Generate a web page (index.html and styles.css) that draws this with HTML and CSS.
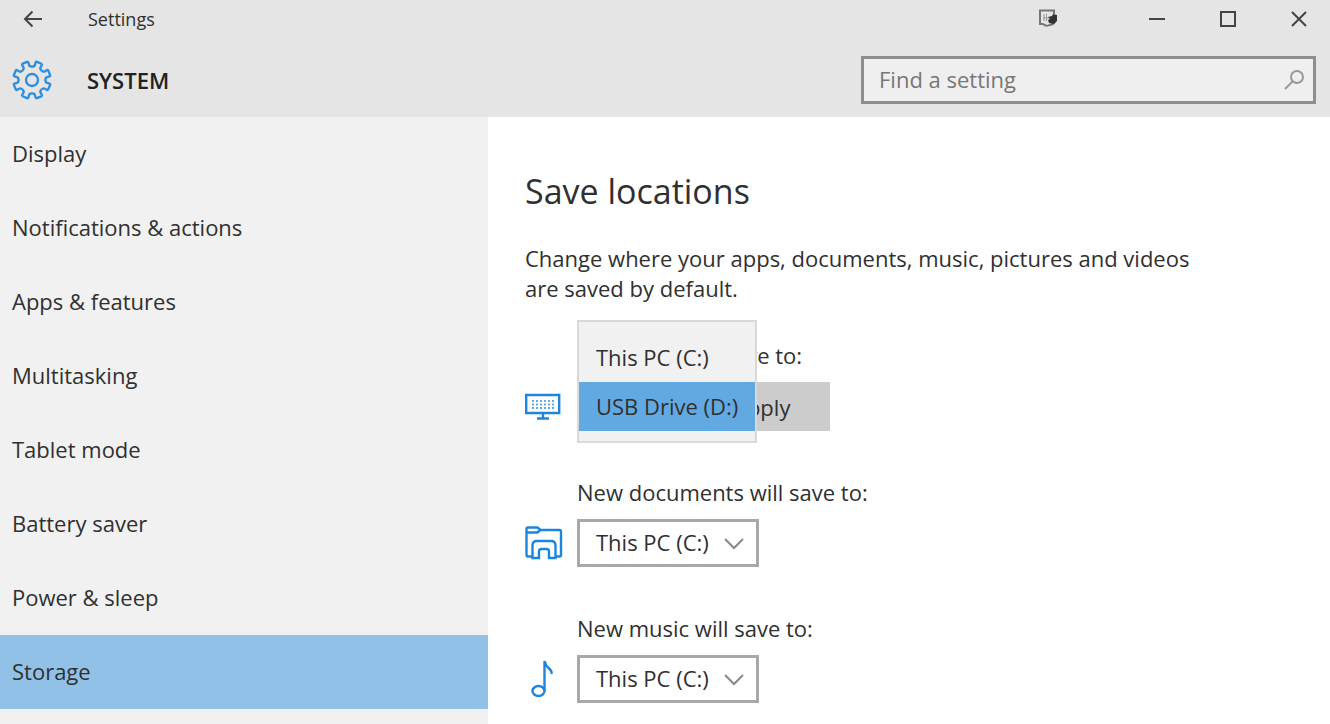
FILE: index.html
```html
<!DOCTYPE html>
<html lang="en">
<head>
<meta charset="utf-8">
<title>Settings</title>
<link rel="stylesheet" href="styles.css">
</head>
<body>
<header class="header">
  <div class="titlebar">
    <button class="icon-button back" aria-label="Back">
      <svg width="20" height="18" viewBox="0 0 20 18"><path d="M19 9H2M9.500 1.500L2 9l7.500 7.500"/></svg>
    </button>
    <span class="app-name">Settings</span>
    <button class="icon-button tablet" aria-label="Window options">
      <svg width="20" height="20" viewBox="0 0 20 20"><path class="thin" d="M16 5V1.500H2V15H5.500"/><path class="thin" d="M5 15Q8 18 11.500 16Q15 16 16.500 13"/><path class="faint" d="M6 5v7M8.500 5v7M5 9h6"/><path class="solid" d="M10 8l4-1 1-2 4 1v6l-3 3-5-1-1-3 2-1z"/></svg>
    </button>
    <button class="icon-button" aria-label="Minimize">
      <svg width="18" height="18" viewBox="0 0 18 18"><path d="M1 9h16"/></svg>
    </button>
    <button class="icon-button" aria-label="Maximize">
      <svg width="18" height="18" viewBox="0 0 18 18"><path d="M2 2h14v14H2z"/></svg>
    </button>
    <button class="icon-button" aria-label="Close">
      <svg width="18" height="18" viewBox="0 0 18 18"><path d="M2 2l14 14M16 2L2 16"/></svg>
    </button>
  </div>
  <div class="heading-row">
    <svg class="gear" width="40" height="40" viewBox="-20 -20 40 40" aria-hidden="true">
      <defs><path id="tooth" d="M0-13.400Q2.800-13.400 3.200-15.800L3.500-17.500Q4-18.500 5-18.100L9.300-16.300Q10.200-15.800 9.900-15L8.900-13.400Q7.500-11.500 9.480-9.480"/></defs>
      <use href="#tooth"/><use href="#tooth" transform="rotate(45)"/><use href="#tooth" transform="rotate(90)"/><use href="#tooth" transform="rotate(135)"/>
      <use href="#tooth" transform="rotate(180)"/><use href="#tooth" transform="rotate(225)"/><use href="#tooth" transform="rotate(270)"/><use href="#tooth" transform="rotate(315)"/>
      <circle r="6"/>
    </svg>
    <h1 class="section-name">SYSTEM</h1>
    <div class="search">
      <input class="search-input" type="text" placeholder="Find a setting" aria-label="Find a setting">
      <svg class="search-icon" width="22" height="22" viewBox="0 0 22 22" aria-hidden="true"><circle cx="14" cy="8" r="6"/><path d="M9.500 12.500L2 20"/></svg>
    </div>
  </div>
</header>
<div class="body">
  <nav class="sidebar">
    <a class="nav-link" href="#">Display</a>
    <a class="nav-link" href="#">Notifications &amp; actions</a>
    <a class="nav-link" href="#">Apps &amp; features</a>
    <a class="nav-link" href="#">Multitasking</a>
    <a class="nav-link" href="#">Tablet mode</a>
    <a class="nav-link" href="#">Battery saver</a>
    <a class="nav-link" href="#">Power &amp; sleep</a>
    <a class="nav-link active" href="#" aria-current="page">Storage</a>
  </nav>
  <main class="content">
    <h2 class="title">Save locations</h2>
    <p class="description">Change where your apps, documents, music, pictures and videos are saved by default.</p>
    <div class="locations">
      <div class="location">
        <label class="label" for="apps">New apps will save to:</label>
        <svg class="icon" width="38" height="40" viewBox="0 0 38 40" aria-hidden="true"><path d="M1.200 8h33v18h-33z"/><path d="M18 27v4M12 31.500h12"/><path class="dots" d="M7 14h22M7 17.500h22M7 21h22"/></svg>
        <div class="controls">
          <select class="select short" id="apps"><option>This PC (C:)</option><option selected>USB Drive (D:)</option></select>
          <button class="apply">Apply</button>
          <ul class="menu" role="listbox" aria-label="New apps will save to">
            <li class="option" role="option" aria-selected="false">This PC (C:)</li>
            <li class="option selected" role="option" aria-selected="true">USB Drive (D:)</li>
          </ul>
        </div>
      </div>
      <div class="location">
        <label class="label" for="documents">New documents will save to:</label>
        <svg class="icon" width="38" height="40" viewBox="0 0 38 40" aria-hidden="true"><path d="M7 33.500H3Q1.500 33.500 1.500 32V6Q1.500 4.500 3 4.500H12.500L15.500 7H34.500Q36 7 36 8.500V32Q36 33.500 34.500 33.500H31M2 9.500H12.500L15.500 7"/><path d="M7.500 35V22.500Q7.500 18 12 18H26Q30.500 18 30.500 22.500V35H24V28.500Q24 26 21.500 26H16.500Q14 26 14 28.500V35Z"/></svg>
        <div class="controls">
          <select class="select" id="documents"><option>This PC (C:)</option><option>USB Drive (D:)</option></select>
          <svg class="chevron" width="20" height="12" viewBox="0 0 20 12" aria-hidden="true"><path d="M1 1l9 9 9-9"/></svg>
        </div>
      </div>
      <div class="location">
        <label class="label" for="music">New music will save to:</label>
        <svg class="icon" width="38" height="40" viewBox="0 0 38 40" aria-hidden="true"><ellipse cx="13.500" cy="32" rx="6" ry="5"/><path d="M19.500 32V2Q20.500 6.500 24 9.500Q27 12 26.500 15"/></svg>
        <div class="controls">
          <select class="select" id="music"><option>This PC (C:)</option><option>USB Drive (D:)</option></select>
          <svg class="chevron" width="20" height="12" viewBox="0 0 20 12" aria-hidden="true"><path d="M1 1l9 9 9-9"/></svg>
        </div>
      </div>
    </div>
  </main>
</div>
</body>
</html>
```
FILE: styles.css
```css
* {
  box-sizing: border-box;
}

body {
  margin: 0;
  min-height: 100vh;
  display: flex;
  flex-direction: column;
  background: #fff;
  color: #303030;
  font: 22px/30px "Open Sans", "Noto Sans", sans-serif;
}

button,
input,
select {
  font: inherit;
  color: inherit;
}

svg {
  display: block;
  fill: none;
  stroke: #444;
  stroke-width: 2;
}

/* Window header */

.header {
  background: #e5e5e5;
  padding-bottom: 13px;
}

.titlebar {
  display: flex;
  align-items: center;
  height: 38px;
  padding-right: 22px;
}

.app-name {
  margin-right: auto;
  font-size: 18px;
}

.icon-button {
  display: flex;
  padding: 0;
  margin-left: 53px;
  border: 0;
  background: none;
}

.back {
  margin: 0 45px 0 23px;
}

.tablet {
  margin-right: 37px;
}

.thin {
  stroke: #777;
}

.faint {
  stroke: #999;
  stroke-width: 1;
}

.solid {
  fill: #333;
  stroke: none;
}

.heading-row {
  display: flex;
  align-items: center;
  height: 66px;
  padding: 18px 14px 0 12px;
}

.gear {
  margin-right: 35px;
  stroke: #2b8ee0;
  stroke-width: 2.3;
}

.section-name {
  margin: 0 auto 0 0;
  font-size: 22px;
  font-weight: 600;
  color: #222;
}

.search {
  position: relative;
  width: 455px;
}

.search-input {
  display: block;
  width: 100%;
  height: 48px;
  padding: 0 50px 2px 15px;
  border: 3px solid #8e8e8e;
  border-radius: 0;
  background: #efefef;
}

.search-input::placeholder {
  color: #777;
  opacity: 1;
}

.search-icon {
  position: absolute;
  right: 11px;
  top: 13px;
  stroke: #999;
}

/* Page body */

.body {
  flex: 1;
  display: flex;
}

.sidebar {
  width: 488px;
  flex: none;
  background: #f1f1f1;
}

.nav-link {
  display: flex;
  align-items: center;
  height: 74px;
  padding: 0 12px 2px;
  color: inherit;
  text-decoration: none;
}

.active {
  background: #91c1e7;
}

.content {
  flex: 1;
  padding: 50px 37px 0;
}

.title {
  margin: 0;
  font-size: 34px;
  line-height: 48px;
  font-weight: 400;
}

.description {
  max-width: 680px;
  margin: 28px 0 37px;
}

.locations {
  display: grid;
  gap: 46px;
}

.location {
  display: grid;
  grid-template-columns: 38px max-content;
  column-gap: 14px;
  row-gap: 12px;
  align-items: center;
}

.label {
  grid-column: 2;
}

.icon {
  stroke: #1c86de;
  stroke-width: 2.4;
}

.dots {
  stroke-width: 2;
  stroke-dasharray: 2 2;
  opacity: 0.7;
}

.controls {
  position: relative;
  display: flex;
  gap: 6px;
  justify-self: start;
}

.select {
  appearance: none;
  width: 182px;
  height: 48px;
  padding: 0 16px 2px;
  border: 3px solid #a8a8a8;
  border-radius: 0;
  background: #fff;
}

.short {
  width: 110px;
}

.chevron {
  position: absolute;
  right: 15px;
  top: 19px;
  stroke: #888;
}

.apply {
  height: 49px;
  padding: 0 40px;
  border: 0;
  background: #ccc;
}

.menu {
  position: absolute;
  left: 0;
  bottom: -12px;
  width: 180px;
  margin: 0;
  padding: 11px 0 10px;
  border: 2px solid #d9d9d9;
  background: #f1f1f1;
  list-style: none;
}

.option {
  padding: 9px 0 10px 17px;
  white-space: nowrap;
}

.selected {
  background: #62a9e2;
}
```
